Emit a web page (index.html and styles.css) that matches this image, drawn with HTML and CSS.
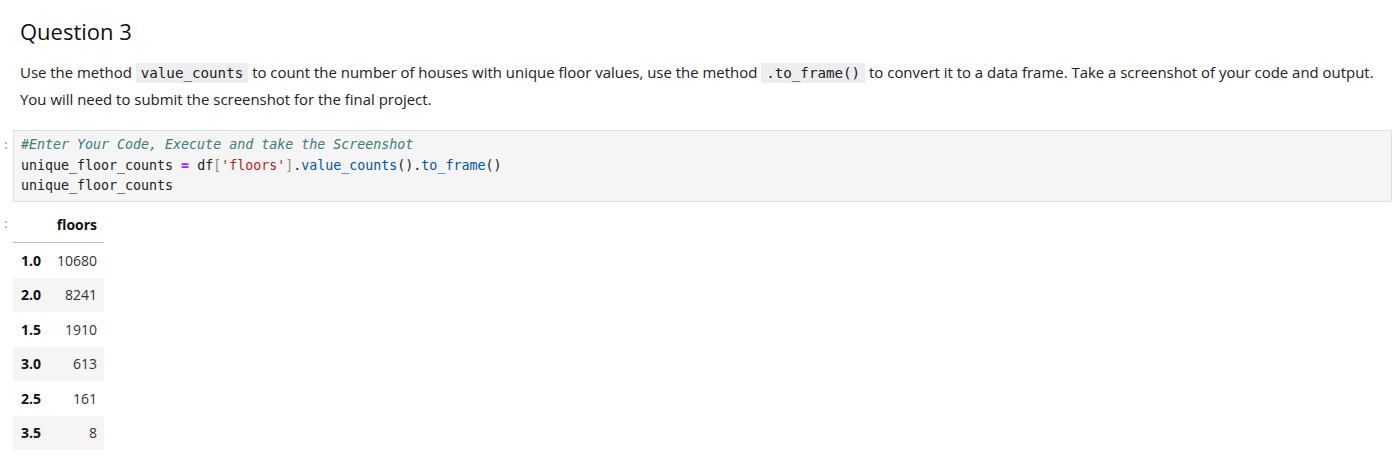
FILE: index.html
```html
<!DOCTYPE html>
<html>
<head>
<meta charset="utf-8">
<link rel="stylesheet" href="styles.css">
</head>
<body>
<div class="notebook">
  <div class="cell md-cell">
    <div class="prompt"></div>
    <div class="md">
      <h2 class="title">Question 3</h2>
      <p class="text">Use the method <code class="ic">value_counts</code> to count the number of houses with unique floor values, use the method <code class="ic">.to_frame()</code> to convert it to a data frame. Take a screenshot of your code and output. You will need to submit the screenshot for the final project.</p>
    </div>
  </div>
  <div class="cell code-cell">
    <div class="prompt">:</div>
    <pre class="code"><span class="cm">#Enter Your Code, Execute and take the Screenshot</span>
unique_floor_counts <span class="op">=</span> df<span class="br">[</span><span class="st">'floors'</span><span class="br">]</span>.<span class="pr">value_counts</span>().<span class="pr">to_frame</span>()
unique_floor_counts</pre>
  </div>
  <div class="cell out-cell">
    <div class="prompt">:</div>
    <table class="df">
      <thead><tr><th></th><th>floors</th></tr></thead>
      <tbody>
        <tr><th>1.0</th><td>10680</td></tr>
        <tr><th>2.0</th><td>8241</td></tr>
        <tr><th>1.5</th><td>1910</td></tr>
        <tr><th>3.0</th><td>613</td></tr>
        <tr><th>2.5</th><td>161</td></tr>
        <tr><th>3.5</th><td>8</td></tr>
      </tbody>
    </table>
  </div>
</div>
</body>
</html>
```
FILE: styles.css
```css
html, body { margin: 0; padding: 0; background: #fff; }
body { font-family: "Open Sans", "Noto Sans", sans-serif; color: #212121; }
.notebook { display: flex; flex-direction: column; }
.cell { display: flex; }
.prompt { width: 13px; flex: none; color: #9e9e9e; font-family: "DejaVu Sans Mono", monospace; font-size: 13px; box-sizing: border-box; padding-left: 2px; }
.md { padding: 16px 0 0 7px; flex: 1; }
.title { margin: 0; font-weight: 400; font-size: 22px; line-height: 30px; color: #111; }
.text { margin: 13px 0 0; font-size: 14.95px; line-height: 26px; color: #212121; }
.ic { font-family: "DejaVu Sans Mono", monospace; font-size: 14.2px; background: #eee; padding: 2px 5px; }
.code-cell { margin-top: 18px; }
.code-cell .prompt { padding-top: 5px; line-height: 20.5px; }
.code { flex: 1; margin: 0; background: #f5f5f5; border: 1px solid #e0e0e0; padding: 4px 7px 4px; font-family: "DejaVu Sans Mono", monospace; font-size: 13.3px; line-height: 20.5px; color: #212121; }
.cm { color: #3d7b7b; font-style: italic; }
.op { color: #aa22ff; font-weight: bold; }
.st { color: #ba2121; }
.br { color: #9a9060; }
.pr { color: #0055aa; }
.out-cell { margin-top: 10px; }
.out-cell .prompt { padding-top: 4px; }
.df { border-collapse: collapse; font-size: 14px; color: #333; }
.df th, .df td { padding: 0 6px 0 8px; height: 34.5px; text-align: right; }
.df td { padding-right: 7px; padding-left: 10px; }
.df thead th { height: 31px; box-sizing: border-box; padding-bottom: 4px; vertical-align: middle; border-bottom: 1px solid #bdbdbd; font-weight: 700; color: #111; }
.df thead th:last-child { padding-right: 7px; }
.df tbody th { font-weight: 700; color: #111; text-align: left; }
.df tbody tr:nth-child(even) { background: #f5f5f5; }
```
